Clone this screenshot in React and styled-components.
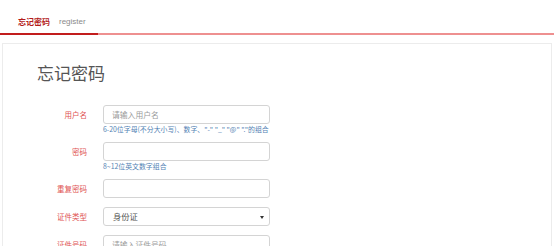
import React from "react";
import styled, { createGlobalStyle } from "styled-components";

const Global = createGlobalStyle`
  html, body { margin: 0; padding: 0; background: #fff; }
  body { font-family: "Noto Sans CJK SC", "Liberation Sans", sans-serif; }
  * { box-sizing: border-box; }
`;

const Page = styled.div`
  width: 554px;
  height: 246px;
  overflow: hidden;
`;

const TabStrip = styled.div`
  position: relative;
  display: flex;
  gap: 9px;
  height: 35px;
  padding: 17px 0 0 18px;
  border-bottom: 2px solid #ee9090;
`;

const Tab = styled.div`
  font-size: 8px;
  line-height: 10px;
  height: 10px;
  font-weight: ${(p) => (p.$active ? 700 : 400)};
  color: ${(p) => (p.$active ? "#b31b1b" : "#8a8a8a")};
  font-family: ${(p) => (p.$latin ? '"Liberation Sans", sans-serif' : "inherit")};
`;

const InkBar = styled.div`
  position: absolute;
  left: 0;
  bottom: -2px;
  width: 98px;
  height: 2px;
  background: #c21d1d;
`;

const Card = styled.div`
  margin: 8px 2px 0;
  border: 1px solid #ececec;
  border-bottom: none;
  padding: 19px 0 0 34px;
  height: 220px;
`;

const Title = styled.h1`
  margin: 0;
  font-size: 17px;
  line-height: 20px;
  font-weight: 400;
  color: #555;
`;

const Form = styled.div`
  margin-top: 22px;
  display: flex;
  flex-direction: column;
  gap: 9px;
`;

const Group = styled.div`
  display: grid;
  grid-template-columns: 50px 167px;
  column-gap: 16px;
  align-items: center;
`;

const Label = styled.div`
  text-align: right;
  font-size: 7.5px;
  line-height: 19px;
  color: #e05252;
`;

const Input = styled.input`
  height: 19px;
  width: 167px;
  border: 1px solid #d4d4d4;
  border-radius: 3px;
  padding: 0 8px;
  font-size: 7.8px;
  font-family: inherit;
  color: #555;
  background: #fff;
  outline: none;
  &::placeholder { color: #9a9a9a; }
`;

const SelectBox = styled.div`
  position: relative;
  height: 19px;
  width: 167px;
  border: 1px solid #d4d4d4;
  border-radius: 3px;
  padding: 0 0 0 9px;
  font-size: 8.3px;
  line-height: 17px;
  color: #555;
  &::after {
    content: "";
    position: absolute;
    right: 5px;
    top: 8px;
    border-left: 2px solid transparent;
    border-right: 2px solid transparent;
    border-top: 3px solid #333;
  }
`;

const Hint = styled.div`
  grid-column: 2;
  margin-top: 1px;
  font-size: 6.9px;
  line-height: 8px;
  color: #5282b4;
  white-space: nowrap;
`;

const rows = [
  { label: "用户名", placeholder: "请输入用户名", hint: "6-20位字母(不分大小写)、数字、\"-\" \"_\" \"@\" \".\"的组合" },
  { label: "密码", placeholder: "", hint: "8~12位英文数字组合", type: "password" },
  { label: "重复密码", placeholder: "", type: "password" },
  { label: "证件类型", select: "身份证" },
  { label: "证件号码", placeholder: "请输入证件号码" },
];

export default function App() {
  return (
    <Page>
      <Global />
      <TabStrip>
        <Tab $active>忘记密码</Tab>
        <Tab $latin>register</Tab>
        <InkBar />
      </TabStrip>
      <Card>
        <Title>忘记密码</Title>
        <Form>
          {rows.map((r) => (
            <Group key={r.label}>
              <Label>{r.label}</Label>
              {r.select ? (
                <SelectBox>{r.select}</SelectBox>
              ) : (
                <Input type={r.type || "text"} placeholder={r.placeholder} readOnly />
              )}
              {r.hint && <Hint>{r.hint}</Hint>}
            </Group>
          ))}
        </Form>
      </Card>
    </Page>
  );
}
